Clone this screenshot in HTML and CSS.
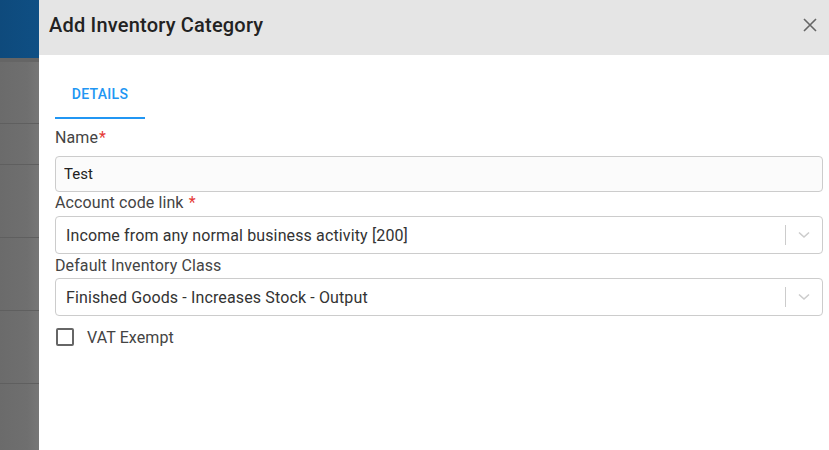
FILE: index.html
```html
<!DOCTYPE html>
<html lang="en">
<head>
  <meta charset="UTF-8">
  <title>Add Inventory Category</title>
  <link rel="stylesheet" href="styles.css">
</head>
<body>
  <div class="page">
    <!-- Page behind the drawer, dimmed -->
    <div class="backdrop">
      <div class="backdrop-bar"></div>
      <div class="backdrop-shade"></div>
      <div class="backdrop-row first"></div>
      <div class="backdrop-row"></div>
      <div class="backdrop-row tall"></div>
      <div class="backdrop-row tall"></div>
      <div class="backdrop-row tall"></div>
      <div class="backdrop-row rest"></div>
    </div>

    <div class="drawer">
      <div class="drawer-header">
        <h1 class="drawer-title">Add Inventory Category</h1>
        <button class="close-btn" aria-label="Close">
          <svg width="14" height="14" viewBox="0 0 14 14">
            <path d="M1 1 L13 13 M13 1 L1 13" stroke="#666" stroke-width="1.6" fill="none"/>
          </svg>
        </button>
      </div>

      <div class="tabs">
        <div class="tab active">DETAILS</div>
      </div>

      <form class="form">
        <label class="field-label label-name">Name<span class="req">*</span></label>
        <input class="text-input" type="text" value="Test">

        <label class="field-label label-account">Account code link <span class="req">*</span></label>
        <div class="select">
          <span class="select-value">Income from any normal business activity [200]</span>
          <span class="select-sep"></span>
          <svg class="chevron" width="12" height="8" viewBox="0 0 12 8">
            <path d="M1 1.5 L6 6 L11 1.5" stroke="#ccc" stroke-width="1.6" fill="none"/>
          </svg>
        </div>

        <label class="field-label label-class">Default Inventory Class</label>
        <div class="select">
          <span class="select-value">Finished Goods - Increases Stock - Output</span>
          <span class="select-sep"></span>
          <svg class="chevron" width="12" height="8" viewBox="0 0 12 8">
            <path d="M1 1.5 L6 6 L11 1.5" stroke="#ccc" stroke-width="1.6" fill="none"/>
          </svg>
        </div>

        <label class="check-row">
          <span class="checkbox"></span>
          <span class="check-label">VAT Exempt</span>
        </label>
      </form>
    </div>
  </div>
</body>
</html>
```

FILE: styles.css
```css
body {
  margin: 0;
  font-family: Roboto, "Noto Sans", Arial, sans-serif;
  color: #333;
  background: #fff;
}

.page {
  display: flex;
  height: 450px;
  overflow: hidden;
}

/* Dimmed page behind the drawer */
.backdrop {
  width: 39px;
  flex-shrink: 0;
  display: flex;
  flex-direction: column;
  background: linear-gradient(to right, #6b6b6b, #6f6f6f 70%, #777);
}

.backdrop-bar {
  height: 58px;
  background: linear-gradient(to right, #0e4a7c, #0f4f84);
}

.backdrop-shade {
  height: 4px;
  background: #656565;
}

.backdrop-row {
  height: 40px;
  border-bottom: 1px solid #5f5f5f;
}

.backdrop-row.first {
  height: 61px;
}

.backdrop-row.tall {
  height: 72px;
}

.backdrop-row.rest {
  flex: 1;
  border-bottom: none;
}

.drawer {
  flex: 1;
  display: flex;
  flex-direction: column;
  background: #fff;
}

.drawer-header {
  box-sizing: border-box;
  height: 55px;
  display: flex;
  align-items: center;
  justify-content: space-between;
  padding: 0 12px 5px 10px;
  background: #e5e5e5;
}

.drawer-title {
  margin: 0;
  font-size: 20px;
  font-weight: 500;
  letter-spacing: 0.2px;
  color: #222;
}

.close-btn {
  border: none;
  background: none;
  padding: 0;
  width: 14px;
  height: 14px;
  cursor: pointer;
}

.close-btn svg {
  display: block;
}

.tabs {
  display: flex;
  padding: 16px 0 0 16px;
}

.tab {
  width: 90px;
  height: 46px;
  display: flex;
  align-items: center;
  justify-content: center;
  font-size: 14px;
  font-weight: 500;
  letter-spacing: 0.3px;
  color: #2196f3;
}

.tab.active {
  border-bottom: 2px solid #2196f3;
}

.form {
  display: flex;
  flex-direction: column;
  padding: 0 6px 0 16px;
}

.field-label {
  font-size: 16px;
  line-height: 20px;
  letter-spacing: 0.1px;
  color: #444;
}

.label-name {
  margin-top: 9px;
  margin-bottom: 8px;
}

.label-account {
  margin-top: 1px;
  margin-bottom: 3px;
}

.label-class {
  margin-top: 2px;
  margin-bottom: 2px;
}

.req {
  color: #e53935;
  margin-left: 1px;
}

.text-input {
  box-sizing: border-box;
  height: 36px;
  width: 100%;
  padding: 0 8px;
  border: 1px solid #ccc;
  border-radius: 4px;
  background: #fbfbfb;
  font-family: inherit;
  font-size: 15px;
  color: #222;
}

.select {
  box-sizing: border-box;
  height: 38px;
  display: flex;
  align-items: center;
  border: 1px solid #ccc;
  border-radius: 4px;
  background: #fff;
  padding-left: 10px;
}

.select-value {
  flex: 1;
  font-size: 16px;
  letter-spacing: 0.13px;
  color: #333;
}

.select-sep {
  width: 1px;
  height: 20px;
  background: #ccc;
}

.chevron {
  margin: 0 12px 0 12px;
}

.check-row {
  display: flex;
  align-items: center;
  margin-top: 11px;
  height: 20px;
}

.checkbox {
  box-sizing: border-box;
  width: 18px;
  height: 18px;
  margin-left: 1px;
  border: 2px solid #666;
  border-radius: 2px;
}

.check-label {
  margin-left: 13px;
  font-size: 16px;
  letter-spacing: 0.1px;
  color: #444;
}
```
